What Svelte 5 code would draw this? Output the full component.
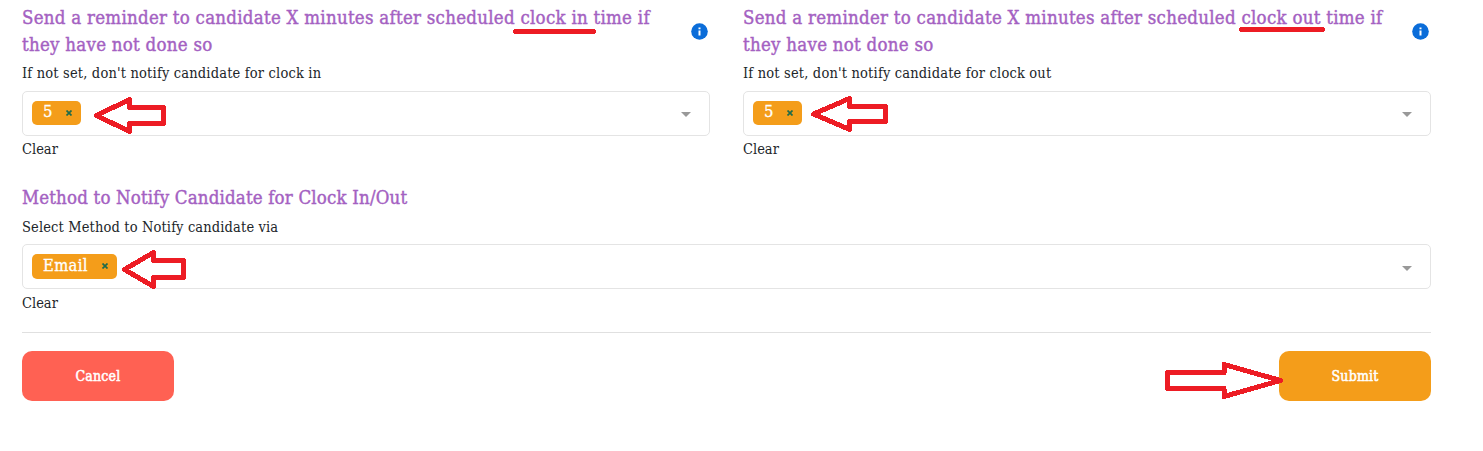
<script lang="ts">
  let reminders = [
    {
      label: 'Send a reminder to candidate X minutes after scheduled clock in time if they have not done so',
      help: "If not set, don't notify candidate for clock in",
      tags: ['5'],
    },
    {
      label: 'Send a reminder to candidate X minutes after scheduled clock out time if they have not done so',
      help: "If not set, don't notify candidate for clock out",
      tags: ['5'],
    },
  ];
  let methods = ['Email'];
</script>

{#snippet select(tags: string[])}
  <div class="select">
    {#each tags as tag}
      <span class="tag">
        <span class="tag-text">{tag}</span>
        <svg class="remove" width="6" height="6" viewBox="0 0 6 6">
          <path d="M.5 .5L5.5 5.5M5.5 .5L.5 5.5" />
        </svg>
      </span>
    {/each}
    <span class="caret"></span>
  </div>
{/snippet}

<main>
  <div class="row">
    {#each reminders as field}
      <div class="field">
        <div class="heading">
          <h4>{field.label}</h4>
          <svg class="info" width="17" height="17" viewBox="0 0 17 17">
            <circle cx="8.5" cy="8.5" r="8.3" fill="#0b6dd9" />
            <path d="M7.5 4.4h2v1.8h-2zM7.5 7.4h2v5h-2z" fill="#fff" />
          </svg>
        </div>
        <p>{field.help}</p>
        {@render select(field.tags)}
        <div class="clear">Clear</div>
      </div>
    {/each}
  </div>

  <div class="field method">
    <h4>Method to Notify Candidate for Clock In/Out</h4>
    <p>Select Method to Notify candidate via</p>
    {@render select(methods)}
    <div class="clear">Clear</div>
  </div>

  <div class="actions">
    <button class="cancel">Cancel</button>
    <button class="submit">Submit</button>
  </div>

  <svg class="marks" width="1483" height="451" viewBox="0 0 1483 451">
    <path d="M515.5 31.5H593.5M1241.5 29.5H1322.5" />
    <path d="M96.5 115.5L129.5 99.5V107.5H163.5V123.5H129.5V131.5Z" />
    <path d="M813.5 114L849.5 98.5V106.5H885.5V121.5H849.5V129.5Z" />
    <path d="M124.5 269.5L153.5 252.5V260.5H183.5V277.5H153.5V286.5Z" />
    <path d="M1280.5 380.5L1224 364.5V372.5H1167.5V388.5H1224V396.5Z" />
  </svg>
</main>

<style>
  :global(body) {
    margin: 0;
    background: #fff;
  }
  main {
    position: relative;
    box-sizing: border-box;
    width: 1483px;
    height: 451px;
    padding: 4px 52px 0 22px;
    overflow: hidden;
    color: #212529;
    font-family: "DejaVu Serif Condensed", "DejaVu Serif", serif;
    font-stretch: condensed;
  }
  .row {
    display: flex;
    gap: 33px;
  }
  .row .field {
    flex: 1;
    min-width: 0;
  }
  .heading {
    display: flex;
    justify-content: space-between;
    align-items: center;
    padding-right: 2px;
  }
  .heading h4 {
    width: 650px;
    letter-spacing: 0.27px;
  }
  .info {
    margin-top: 1px;
  }
  h4 {
    margin: 0;
    color: #a461c2;
    font-size: 18.5px;
    font-weight: 400;
    line-height: 27px;
    letter-spacing: 0.18px;
    -webkit-text-stroke: 0.4px #a461c2;
  }
  p {
    margin: 4px 0 7px;
    font-size: 14.5px;
    line-height: 22px;
    letter-spacing: 0.18px;
  }
  .select {
    display: flex;
    align-items: flex-start;
    box-sizing: border-box;
    height: 45px;
    padding: 9px 18px 0 9px;
    border: 1px solid #e4e4e4;
    border-radius: 5px;
  }
  .tag {
    display: flex;
    align-items: center;
    height: 24px;
    padding: 0 9px 0 11px;
    border-radius: 5px;
    background: #f49d1a;
    color: #fff;
    font-size: 16.5px;
    line-height: 22px;
    letter-spacing: 0.3px;
  }
  .tag-text {
    margin-right: 13px;
    padding-bottom: 2px;
    -webkit-text-stroke: 0.3px #fff;
  }
  .remove {
    margin-bottom: 1px;
  }
  .remove path {
    stroke: #1f6b4a;
    stroke-width: 1.7;
  }
  .caret {
    margin: 11px 0 0 auto;
    border: 5px solid transparent;
    border-top-color: #999;
    border-bottom: 0;
  }
  .clear {
    margin-top: 2px;
    font-size: 14.5px;
    line-height: 22px;
  }
  .method {
    margin-top: 24px;
  }
  .method p {
    margin-top: 5px;
    margin-bottom: 6px;
    letter-spacing: 0.14px;
  }
  .method .tag {
    height: 25px;
  }
  .method .tag-text {
    margin-right: 14px;
  }
  .method .caret {
    margin-top: 12px;
  }
  .method .clear {
    margin-top: 3px;
  }
  .actions {
    display: flex;
    justify-content: space-between;
    margin-top: 18px;
    padding-top: 18px;
    border-top: 1px solid #e0e0e0;
  }
  button {
    width: 152px;
    height: 50px;
    padding: 0 0 1px;
    border: 0;
    border-radius: 10px;
    color: #fff;
    font-family: inherit;
    font-size: 14px;
    font-stretch: condensed;
    letter-spacing: 0.2px;
    -webkit-text-stroke: 0.5px #fff;
  }
  .cancel {
    background: #ff6153;
  }
  .submit {
    background: #f49d1a;
  }
  .marks {
    position: absolute;
    top: 0;
    left: 0;
    pointer-events: none;
  }
  .marks path {
    fill: none;
    stroke: #ed1c24;
    stroke-width: 5;
    stroke-linecap: round;
    stroke-linejoin: round;
    shape-rendering: crispEdges;
  }
</style>
